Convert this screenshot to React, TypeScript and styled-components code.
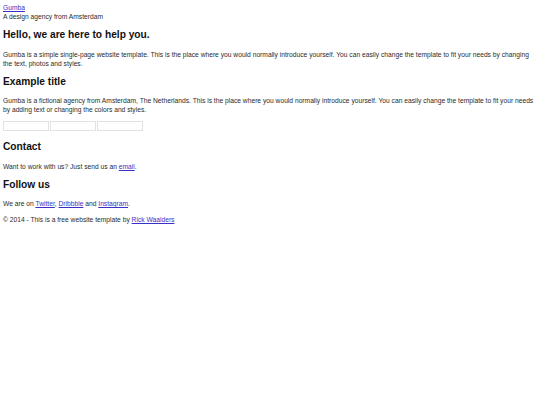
import styled, { createGlobalStyle } from "styled-components"

const Global = createGlobalStyle`
    html, body {
        margin: 0;
        background: #ffffff;
    }
    body {
        font-family: "Liberation Sans", Arial, sans-serif;
        font-size: 6.7px;
        line-height: 9px;
        color: #2b2b2b;
    }
`

const Page = styled.div`
    padding: 3px 3px 20px;
`

const Header = styled.header`
    display: flex;
    flex-direction: column;
    align-items: flex-start;
`

const Link = styled.a`
    color: #3b30c4;
    text-decoration: underline;
`

const Tagline = styled.span`
    color: #2b2b2b;
`

const Title = styled.h2`
    margin: 7px 0 0;
    font-size: 10.2px;
    line-height: 14px;
    font-weight: bold;
    color: #111111;
`

const Text = styled.p<{ gap?: number }>`
    margin: ${props => props.gap ?? 7.5}px 0 0;
`

const Thumbs = styled.div`
    display: flex;
    gap: 1px;
    margin: 7px 0 9px;
`

const Thumb = styled.div`
    width: 44px;
    height: 8px;
    border: 1px solid #e2e2e2;
`

export default function App() {
    return (
        <>
            <Global />
            <Page>
                <Header>
                    <Link href="#">Gumba</Link>
                    <Tagline>A design agency from Amsterdam</Tagline>
                </Header>

                <Title>Hello, we are here to help you.</Title>
                <Text>
                    Gumba is a simple single-page website template. This is the place where you would normally introduce yourself. You can easily change the template to fit your needs by changing the text, photos and styles.
                </Text>

                <Title>Example title</Title>
                <Text>
                    Gumba is a fictional agency from Amsterdam, The Netherlands. This is the place where you would normally introduce yourself. You can easily change the template to fit your needs by adding text or changing the colors and styles.
                </Text>
                <Thumbs>
                    <Thumb />
                    <Thumb />
                    <Thumb />
                </Thumbs>

                <Title>Contact</Title>
                <Text>
                    Want to work with us? Just send us an <Link href="#">email</Link>.
                </Text>

                <Title>Follow us</Title>
                <Text>
                    We are on <Link href="#">Twitter</Link>, <Link href="#">Dribbble</Link> and <Link href="#">Instagram</Link>.
                </Text>

                <Text gap={7}>
                    © 2014 - This is a free website template by <Link href="#">Rick Waalders</Link>
                </Text>
            </Page>
        </>
    )
}
